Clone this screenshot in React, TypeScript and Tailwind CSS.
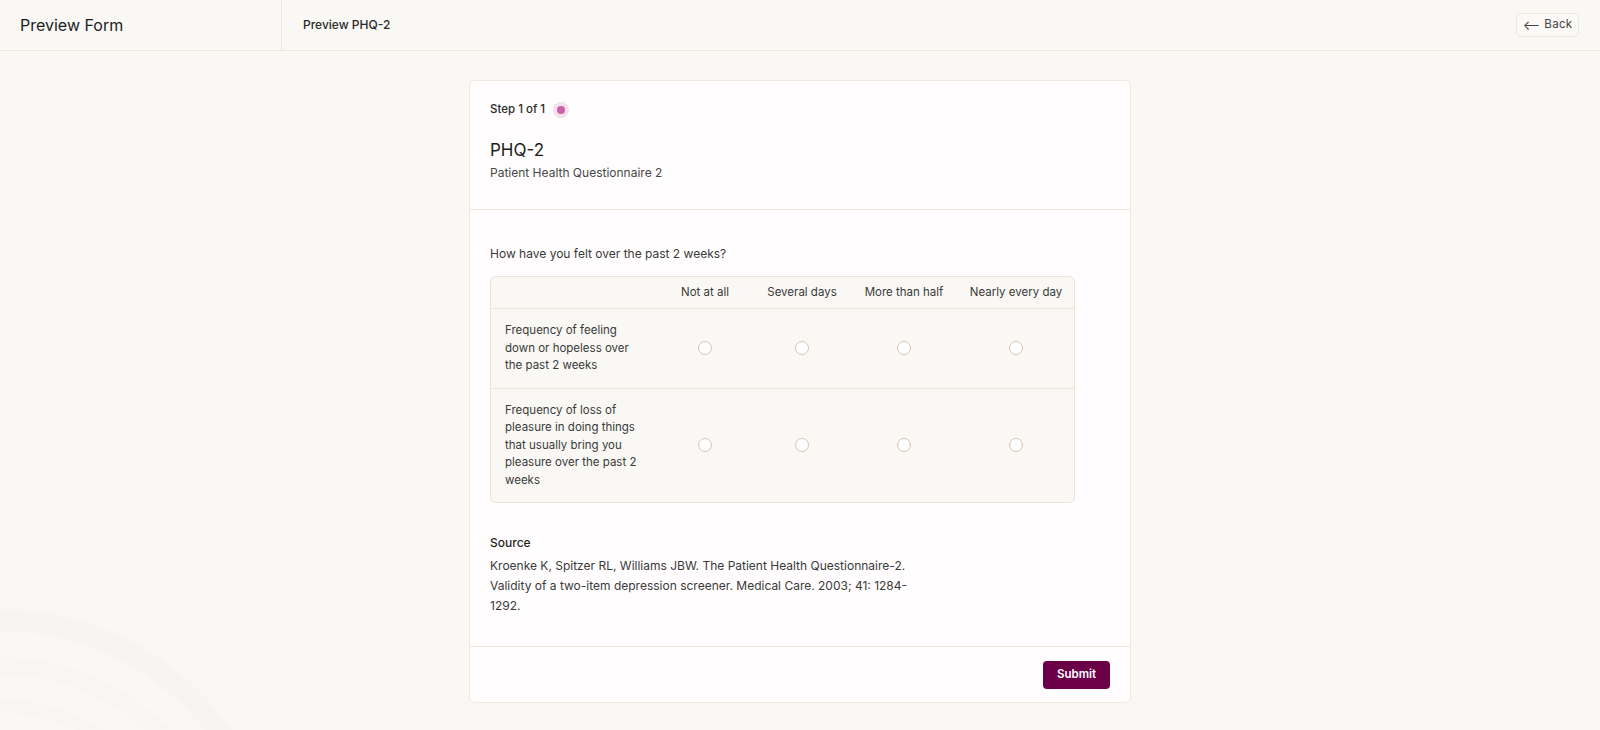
import { useState } from "react";

const options = ["Not at all", "Several days", "More than half", "Nearly every day"];

const questions = [
    { id: "q1", label: "Frequency of feeling down or hopeless over the past 2 weeks" },
    { id: "q2", label: "Frequency of loss of pleasure in doing things that usually bring you pleasure over the past 2 weeks" },
];

export default function App() {
    const [answers, setAnswers] = useState<Record<string, number>>({});

    return (
        <div className="relative min-h-[730px] overflow-hidden bg-[#f9f8f5] text-[#1f1f1f] font-['Inter','Liberation_Sans',sans-serif]">
            {/* faint background arcs */}
            <svg className="absolute left-0 bottom-0 pointer-events-none" width="320" height="170" viewBox="0 0 320 170" fill="none">
                <circle cx="0" cy="330" r="272" stroke="#f7f5f2" strokeWidth="22" />
                <circle cx="0" cy="330" r="226" stroke="#f8f6f3" strokeWidth="18" />
                <circle cx="0" cy="330" r="186" stroke="#f8f6f3" strokeWidth="14" />
            </svg>

            {/* Header */}
            <header className="relative flex h-[51px] items-stretch border-b border-[#ece6dc]">
                <div className="flex w-[282px] items-center border-r border-[#ece6dc] pl-5">
                    <h1 className="text-[16px] text-[#1c1c1c]">Preview Form</h1>
                </div>
                <div className="flex flex-1 items-center justify-between pl-[21px] pr-[21px]">
                    <span className="text-[12px] font-medium text-[#2a2a2a]">Preview PHQ-2</span>
                    <button className="flex h-[24px] w-[63px] items-center justify-center gap-1 rounded-[5px] border border-[#efe7dc] bg-[#faf9f6] text-[11.5px] tracking-wide text-[#444]">
                        <span className="text-[13px] leading-none">⟵</span>
                        <span>Back</span>
                    </button>
                </div>
            </header>

            {/* Main */}
            <main className="relative flex justify-center pt-[29px] pb-[29px]">
                <div className="w-[662px] rounded-[6px] border border-[#eee8de] bg-[#fffdfd]">
                    {/* Top section */}
                    <div className="border-b border-[#eee8de] px-5 pt-5 pb-[27px]">
                        <div className="flex h-[18px] items-center gap-2">
                            <span className="text-[11.5px] font-medium text-[#2a2a2a]">Step 1 of 1</span>
                            <span className="flex h-4 w-4 items-center justify-center rounded-full bg-[#f3e0ea]">
                                <span className="h-2 w-2 rounded-full bg-[#c960a8]" />
                            </span>
                        </div>
                        <h2 className="mt-[19px] text-[17px] leading-6 text-[#1c1c1c]">PHQ-2</h2>
                        <p className="mt-0.5 text-[12px] leading-[18px] text-[#474747]">Patient Health Questionnaire 2</p>
                    </div>

                    {/* Question section */}
                    <div className="px-5 pt-[35px] pb-[30px]">
                        <p className="text-[12px] leading-[18px] text-[#3a3a3a]">How have you felt over the past 2 weeks?</p>

                        <div className="mt-[13px] w-[585px] overflow-hidden rounded-[6px] border border-[#ece4d7] bg-[#f9f8f4]">
                            <div className="grid h-[32px] grid-cols-[165px_98px_96px_108px_116px] items-center border-b border-[#ece4d7] text-[11.5px] text-[#3a3a3a]">
                                <div />
                                {options.map((o) => (
                                    <div key={o} className="text-center whitespace-nowrap">{o}</div>
                                ))}
                            </div>
                            {questions.map((q, qi) => (
                                <div
                                    key={q.id}
                                    className={`grid grid-cols-[165px_98px_96px_108px_116px] items-center ${qi < questions.length - 1 ? "border-b border-[#ece4d7]" : ""}`}
                                >
                                    <div className="px-3.5 py-[13px] text-[11.5px] leading-[17.5px] text-[#3a3a3a]">{q.label}</div>
                                    {options.map((o, oi) => (
                                        <div key={o} className="flex justify-center">
                                            <button
                                                onClick={() => setAnswers({ ...answers, [q.id]: oi })}
                                                className="flex h-[14px] w-[14px] items-center justify-center rounded-full border border-[#d6c6b0] bg-white"
                                            >
                                                {answers[q.id] === oi && <span className="h-[7px] w-[7px] rounded-full bg-[#6b0049]" />}
                                            </button>
                                        </div>
                                    ))}
                                </div>
                            ))}
                        </div>

                        <h3 className="mt-[31px] text-[12px] font-medium leading-[18px] text-[#1f1f1f]">Source</h3>
                        <p className="mt-[4px] max-w-[440px] text-[12px] leading-[20px] text-[#3a3a3a]">
                            Kroenke K, Spitzer RL, Williams JBW. The Patient Health Questionnaire-2. Validity of a two-item depression screener. Medical Care. 2003; 41: 1284-1292.
                        </p>
                    </div>

                    {/* Footer */}
                    <div className="flex h-[56px] items-center justify-end border-t border-[#eee8de] px-5">
                        <button className="h-[28px] w-[67px] rounded-[4px] bg-[#6b0049] text-[11.5px] font-semibold text-white">
                            Submit
                        </button>
                    </div>
                </div>
            </main>
        </div>
    );
}
